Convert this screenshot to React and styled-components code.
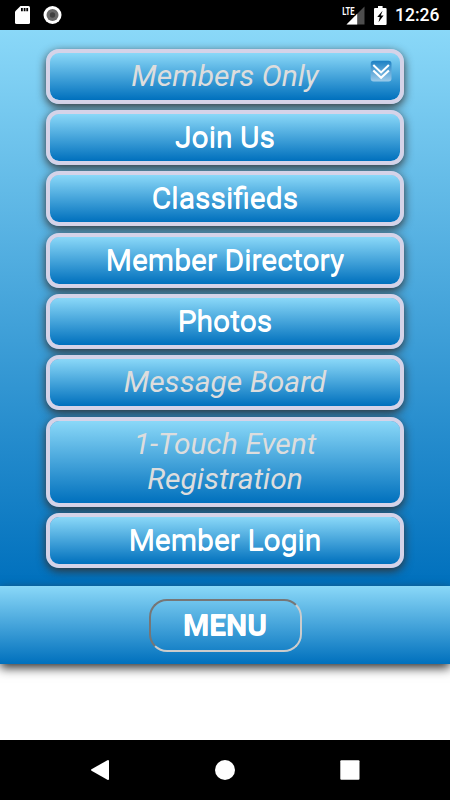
import React from 'react';
import styled, { createGlobalStyle } from 'styled-components';

const GlobalStyle = createGlobalStyle`
  * {
    box-sizing: border-box;
  }
  body {
    margin: 0;
    background: #ffffff;
    font-family: Roboto, sans-serif;
  }
`;

const Screen = styled.div`
  width: 450px;
  height: 800px;
  display: flex;
  flex-direction: column;
  overflow: hidden;
`;

const StatusBar = styled.header`
  height: 30px;
  flex-shrink: 0;
  background: #000000;
  color: #ffffff;
  display: flex;
  align-items: center;
  padding: 0 10px 0 15px;
`;

const StatusIcon = styled.svg`
  display: block;
  flex-shrink: 0;
  margin-right: ${props => props.$gap || 0}px;
`;

const Spacer = styled.div`
  flex: 1;
`;

const Clock = styled.span`
  font-size: 17.5px;
  font-weight: 500;
  line-height: 31px;
  width: 45px;
  white-space: nowrap;
`;

const Content = styled.main`
  height: 556px;
  flex-shrink: 0;
  padding: 18.8px 46px 0;
  background: linear-gradient(#8ad8f8, #0070bd);
  display: flex;
  flex-direction: column;
  gap: 6.3px;
`;

const NavButton = styled.button`
  position: relative;
  width: 100%;
  height: ${props => (props.$tall ? 90 : 55)}px;
  flex-shrink: 0;
  padding: 0 40px 2px;
  border: 4px solid #d5d3e8;
  border-radius: 13px;
  background: linear-gradient(#8ad8f8, #0070bd) padding-box;
  box-shadow: 0 3px 10px #333333;
  color: ${props => (props.$muted ? '#dddddd' : '#ffffff')};
  font-family: inherit;
  font-size: 30px;
  font-style: ${props => (props.$muted ? 'italic' : 'normal')};
  line-height: 35px;
  text-shadow: 0 1px 0 ${props => (props.$muted ? 'transparent' : '#ffffff')};
  cursor: pointer;
`;

const Chevrons = styled.svg`
  position: absolute;
  top: 7.5px;
  right: 8px;
`;

const Footer = styled.footer`
  position: relative;
  height: 78px;
  flex-shrink: 0;
  display: flex;
  justify-content: center;
  align-items: center;
  background: linear-gradient(#8ad8f8, #0070bd);
  box-shadow: 0 4px 10px #333333;
`;

const MenuButton = styled.button`
  width: 153px;
  height: 53px;
  padding: 0 0 2px;
  border: 2px solid;
  border-color: #767676 #cccccc #cccccc #767676;
  border-radius: 18px;
  background: none;
  color: #ffffff;
  font-family: inherit;
  font-size: 30px;
  font-weight: 700;
  text-shadow: 0 1px 0 #ffffff;
  cursor: pointer;
`;

const Blank = styled.div`
  flex: 1;
`;

const NavBar = styled.nav`
  height: 60px;
  flex-shrink: 0;
  background: #000000;
  display: flex;
  justify-content: space-between;
  align-items: center;
  padding: 0 90px;
`;

const items = [
  { label: 'Members Only', muted: true, expand: true },
  { label: 'Join Us' },
  { label: 'Classifieds' },
  { label: 'Member Directory' },
  { label: 'Photos' },
  { label: 'Message Board', muted: true },
  { label: '1-Touch Event Registration', muted: true, tall: true },
  { label: 'Member Login' },
];

function ExpandIcon() {
  return (
    <Chevrons width="22" height="22" viewBox="0 0 22 22">
      <defs>
        <linearGradient id="expand" x1="0" y1="0" x2="0" y2="1">
          <stop offset="0" stopColor="#1c80c4" />
          <stop offset="1" stopColor="#9ccbea" />
        </linearGradient>
      </defs>
      <rect x="0.7" y="0.8" width="20.8" height="20.8" rx="3" fill="url(#expand)" />
      <path d="M3.3 5l7.8 7.4L18.9 5M3.3 10.4l7.8 7.4 7.8-7.4" fill="none" stroke="#ffffff" strokeWidth="2.1" />
    </Chevrons>
  );
}

function Status() {
  return (
    <StatusBar>
      <StatusIcon width="15" height="18" viewBox="0 0 15 18" $gap={13}>
        <path d="M5.5 0H13.5Q15 0 15 1.5V16.5Q15 18 13.5 18H1.5Q0 18 0 16.5V5.5Z" fill="#ffffff" />
        <path d="M6 2h1.8v3.3H6zM8.7 2h1.8v3.3H8.7zM11.3 2h1.8v3.3h-1.8z" fill="#000000" />
      </StatusIcon>
      <StatusIcon width="19" height="18" viewBox="0 0 19 18">
        <circle cx="9.5" cy="9" r="9" fill="#ffffff" />
        <circle cx="9.5" cy="9" r="6" fill="#686868" />
        <circle cx="9.5" cy="9" r="2.7" fill="#404040" />
      </StatusIcon>
      <Spacer />
      <StatusIcon width="23" height="19" viewBox="0 0 23 19" $gap={9}>
        <path d="M22.5 0.5v18H4.5z" fill="#4d4d4d" />
        <path d="M15.2 7.8v10.7H4.5z" fill="#ffffff" />
        <path d="M0 0h13.6v9.4H0z" fill="#000000" />
        <text x="0.3" y="8.6" fill="#ffffff" fontSize="11" fontWeight="700" textLength="12.3" lengthAdjust="spacingAndGlyphs">LTE</text>
      </StatusIcon>
      <StatusIcon width="13" height="19" viewBox="0 0 13 19" $gap={8}>
        <path d="M4 0h4.6v2h3q1 0 1 1v15q0 1-1 1H1q-1 0-1-1V3q0-1 1-1h3z" fill="#ffffff" />
        <path d="M8.6 4.8L3.2 11h2.6L4.5 16.3 9.6 9.6H6.8z" fill="#000000" />
      </StatusIcon>
      <Clock>12:26</Clock>
    </StatusBar>
  );
}

function App() {
  return (
    <>
      <GlobalStyle />
      <Screen>
        <Status />
        <Content>
          {items.map(item => (
            <NavButton key={item.label} type="button" $muted={item.muted} $tall={item.tall}>
              {item.label}
              {item.expand && <ExpandIcon />}
            </NavButton>
          ))}
        </Content>
        <Footer>
          <MenuButton type="button">MENU</MenuButton>
        </Footer>
        <Blank />
        <NavBar>
          <svg width="20" height="20" viewBox="0 0 20 20">
            <path d="M19 0.8v18.4q-.3 1.2-1.6.6L1.5 10.7q-1-.7 0-1.4L17.4.2q1.3-.6 1.6.6z" fill="#ffffff" />
          </svg>
          <svg width="20" height="20" viewBox="0 0 20 20">
            <circle cx="10" cy="10" r="10" fill="#ffffff" />
          </svg>
          <svg width="20" height="20" viewBox="0 0 20 20">
            <rect x="0.3" y="0.3" width="19.2" height="19.4" rx="1" fill="#ffffff" />
          </svg>
        </NavBar>
      </Screen>
    </>
  );
}

export default App;
